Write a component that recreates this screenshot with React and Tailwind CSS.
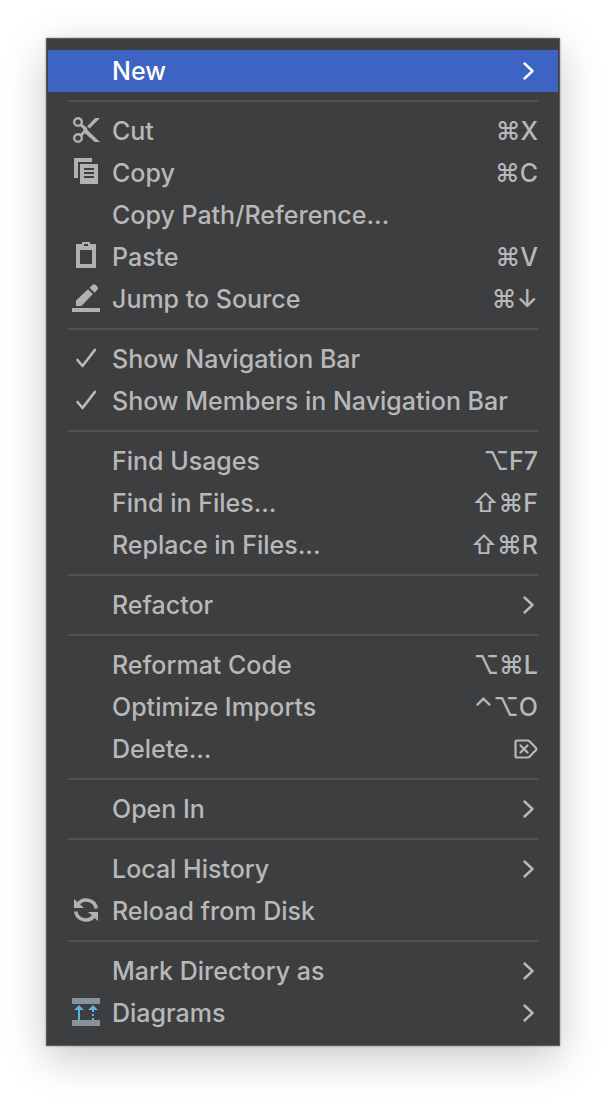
import React from "react";

const CutIcon = () => (
  <svg width="32" height="32" viewBox="0 0 32 32" fill="none" stroke="#afb1b3">
    <circle cx="8" cy="8" r="3.8" strokeWidth="2.4" />
    <circle cx="8" cy="24" r="3.8" strokeWidth="2.4" />
    <path d="M10.5 10.5 16.5 15.5M10.5 21.5 17 15.5" strokeWidth="3" />
    <path d="M14 12.6 16.8 15.6 30 28h-5.2L13 17.6z" fill="#afb1b3" stroke="none" />
    <path d="M17.2 12.2 25.2 4H30L19.6 14.6z" fill="#afb1b3" stroke="none" />
  </svg>
);

const CopyIcon = () => (
  <svg width="32" height="32" viewBox="0 0 32 32" fill="#afb1b3">
    <path d="M4 2h18v4H8v16H4z" />
    <path
      fillRule="evenodd"
      d="M10 8h18v20H10zM14 12v2h10v-2zM14 16v2h10v-2zM14 20v2h10v-2z"
    />
  </svg>
);

const PasteIcon = () => (
  <svg width="32" height="32" viewBox="0 0 32 32" fill="#afb1b3">
    <path
      fillRule="evenodd"
      d="M12 2h8v2h6v24H6V4h6zM14 4v2h4V4zM10 10v14h12V10z"
    />
  </svg>
);

const EditIcon = () => (
  <svg width="32" height="32" viewBox="0 0 32 32" fill="#afb1b3">
    <path d="M2 26h28v4H2z" />
    <path d="M6 24v-5.400L18 7.200l4.900 4.900L11.400 24z" />
    <path d="M19.600 5.800 22.800 2.600q1.300-1 2.600.2L27.600 5q1.100 1.300 0 2.600L24.500 10.700z" />
  </svg>
);

const CheckIcon = () => (
  <svg width="32" height="32" viewBox="0 0 32 32" fill="none">
    <path
      d="M7.500 18 12.500 24 25 7.800"
      stroke="#bbbbbb"
      strokeWidth="2.6"
      strokeLinecap="round"
      strokeLinejoin="round"
    />
  </svg>
);

const ReloadIcon = () => (
  <svg width="32" height="32" viewBox="0 0 32 32" fill="none">
    <path d="M7.500 11A10.200 10.200 0 0 1 26.300 14.500" stroke="#afb1b3" strokeWidth="3.6" />
    <path d="M24.500 21A10.200 10.200 0 0 1 5.700 17.500" stroke="#afb1b3" strokeWidth="3.6" />
    <path d="M4 5v9h10z" fill="#afb1b3" />
    <path d="M28 27v-9H18z" fill="#afb1b3" />
  </svg>
);

const DiagramIcon = () => (
  <svg width="32" height="32" viewBox="0 0 32 32">
    <path d="M2 2h28v6H2zM2 24h28v6H2z" fill="#87939a" />
    <path d="M4 14 9 9l5 5h-4v10H8V14z" fill="#5fb3de" />
    <path d="M18 14l5-5 5 5zM22 14h2v2h-2zM22 18h2v2h-2zM22 22h2v2h-2z" fill="#5fb3de" />
  </svg>
);

const DeleteKey = () => (
  <svg
    width="24"
    height="20"
    viewBox="0 0 24 20"
    fill="none"
    stroke="currentColor"
    strokeWidth="2.2"
    strokeLinecap="round"
    strokeLinejoin="round"
    role="img"
    aria-label="Forward delete"
    className="shrink-0"
  >
    <path d="M3 1.500h10.500q1.200 0 2 .8L22 9q.8 1 0 2l-6.500 6.700q-.8.800-2 .8H3q-1.500 0-1.500-1.500V3Q1.500 1.500 3 1.500z" />
    <path d="M6.500 6.500l7 7M13.500 6.500l-7 7" />
  </svg>
);

const Chevron = () => (
  <svg width="16" height="20" viewBox="0 0 16 20" fill="none" className="shrink-0">
    <path
      d="M2.500 2.500 10.500 10l-8 7.500"
      stroke="currentColor"
      strokeWidth="2.4"
      strokeLinecap="round"
      strokeLinejoin="round"
    />
  </svg>
);

const groups = [
  [{ label: "New", submenu: true, active: true }],
  [
    { label: "Cut", icon: CutIcon, keys: "⌘X" },
    { label: "Copy", icon: CopyIcon, keys: "⌘C" },
    { label: "Copy Path/Reference..." },
    { label: "Paste", icon: PasteIcon, keys: "⌘V" },
    { label: "Jump to Source", icon: EditIcon, keys: "⌘↓" },
  ],
  [
    { label: "Show Navigation Bar", icon: CheckIcon, checked: true },
    { label: "Show Members in Navigation Bar", icon: CheckIcon, checked: true },
  ],
  [
    { label: "Find Usages", keys: "⌥F7" },
    { label: "Find in Files...", keys: "⇧⌘F" },
    { label: "Replace in Files...", keys: "⇧⌘R" },
  ],
  [{ label: "Refactor", submenu: true }],
  [
    { label: "Reformat Code", keys: "⌥⌘L" },
    { label: "Optimize Imports", keys: "⌃⌥O" },
    { label: "Delete...", keys: <DeleteKey /> },
  ],
  [{ label: "Open In", submenu: true }],
  [
    { label: "Local History", submenu: true },
    { label: "Reload from Disk", icon: ReloadIcon },
  ],
  [
    { label: "Mark Directory as", submenu: true },
    { label: "Diagrams", icon: DiagramIcon, submenu: true },
  ],
];

const MenuItem = ({ item }) => {
  const Icon = item.icon;

  return (
    <button
      type="button"
      role={item.checked ? "menuitemcheckbox" : "menuitem"}
      aria-checked={item.checked}
      aria-haspopup={item.submenu ? "menu" : undefined}
      className={`flex w-full h-[42px] items-center pl-[22px] pr-5 text-left font-medium ${
        item.active ? "bg-[#3d64c2] text-white" : "text-[#b8b8b8]"
      }`}
    >
      <span className="flex w-[42px] h-10 shrink-0 self-start items-center">
        {Icon && <Icon />}
      </span>
      <span className="flex-1 whitespace-nowrap">{item.label}</span>
      {item.keys && (
        <kbd className="flex items-center font-[Inter,sans-serif] whitespace-nowrap">
          {item.keys}
        </kbd>
      )}
      {item.submenu && <Chevron />}
    </button>
  );
};

const App = () => {
  return (
    <main className="min-h-screen bg-white px-[46px] pt-[38px] pb-[54px]">
      <div
        role="menu"
        className="border border-[#5c5c5e] bg-[#3d3e40] px-px py-[11px] font-[Inter,sans-serif] text-[25px] leading-[42px] shadow-[0_12px_40px_rgba(0,0,0,0.22),0_0_2px_rgba(0,0,0,0.4)]"
      >
        {groups.map((items, index) => (
          <React.Fragment key={items[0].label}>
            {index > 0 && <hr className="mx-5 my-2 border-t-2 border-[#515254]" />}
            {items.map((item) => (
              <MenuItem key={item.label} item={item} />
            ))}
          </React.Fragment>
        ))}
      </div>
    </main>
  );
};

export default App;
